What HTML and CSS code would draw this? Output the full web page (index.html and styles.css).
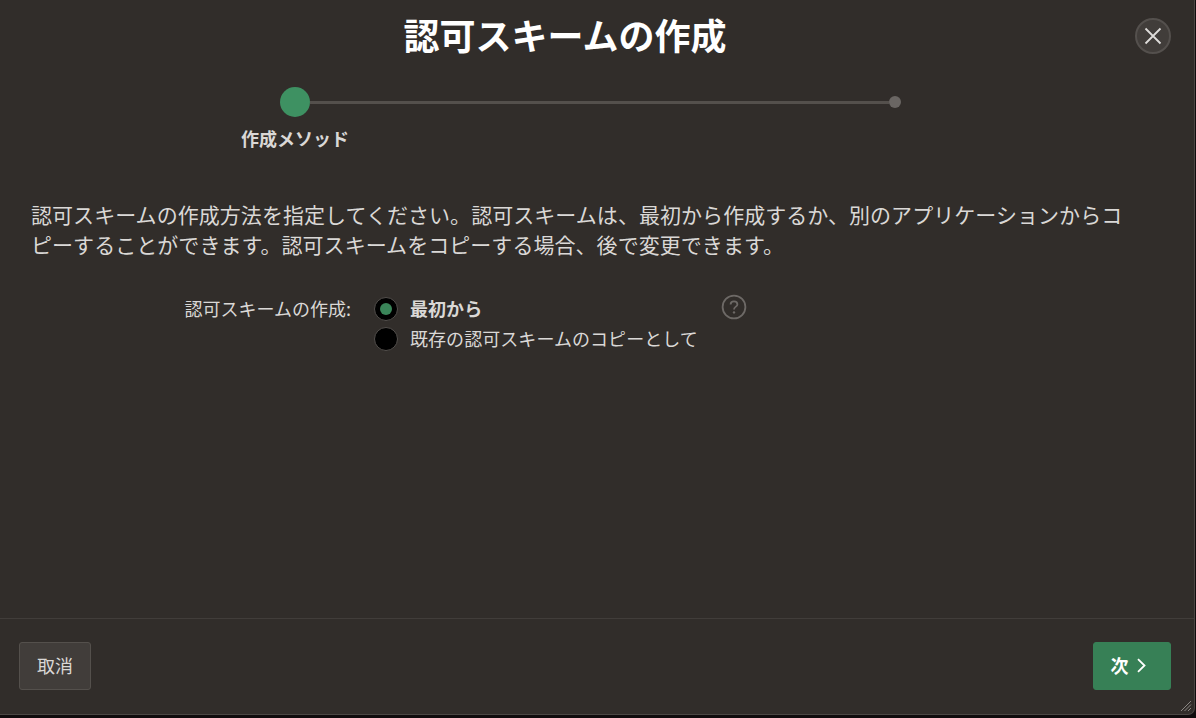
FILE: index.html
```html
<!DOCTYPE html>
<html lang="ja">
<head>
    <meta charset="UTF-8">
    <meta name="viewport" content="width=device-width, initial-scale=1.0">
    <title>認可スキームの作成</title>
    <link rel="stylesheet" href="styles.css">
</head>
<body>
    <div class="dialog">
        <header class="dialog-header">
            <h1 class="title">認可スキームの作成</h1>
            <button class="close-button" type="button" aria-label="閉じる">
                <svg width="18" height="18" viewBox="0 0 18 18"><path d="M1.5 1.5L16.5 16.5M16.5 1.5L1.5 16.5"/></svg>
            </button>
        </header>

        <!-- Wizard progress -->
        <div class="wizard">
            <div class="wizard-track">
                <span class="step-current"></span>
                <span class="step-line"></span>
                <span class="step-next"></span>
            </div>
            <div class="step-label">作成メソッド</div>
        </div>

        <main class="dialog-body">
            <p class="description">認可スキームの作成方法を指定してください。認可スキームは、最初から作成するか、別のアプリケーションからコピーすることができます。認可スキームをコピーする場合、後で変更できます。</p>

            <div class="field">
                <div class="field-label">認可スキームの作成:</div>
                <div class="radio-group">
                    <label class="radio-option selected"><span class="radio"></span><span class="radio-text">最初から</span></label>
                    <label class="radio-option"><span class="radio"></span><span class="radio-text">既存の認可スキームのコピーとして</span></label>
                </div>
                <svg class="help-icon" width="26" height="26" viewBox="0 0 26 26">
                    <circle cx="13" cy="13" r="11.4"/>
                    <path d="M9.6 10.6C9.6 8.5 11 7.4 13 7.4S16.4 8.6 16.4 10.4C16.4 12.7 13 12.6 13 15.4"/>
                    <circle class="dot" cx="13" cy="18.4" r="1.2"/>
                </svg>
            </div>
        </main>

        <footer class="dialog-footer">
            <button class="button" type="button">取消</button>
            <button class="button button-next" type="button">次
                <svg width="9" height="15" viewBox="0 0 9 15"><path d="M1 1.2L7.5 7.5L1 13.8"/></svg>
            </button>
        </footer>

        <svg class="resize-handle" width="12" height="12" viewBox="0 0 12 12"><path d="M1 11L11 1M4.5 11L11 4.5M8 11L11 8"/></svg>
    </div>
</body>
</html>
```

FILE: styles.css
```css
:root {
    --background: #312d2a;
    --border: #413d3a;
    --text: #dad8d6;
    --green: #378056;
}

* {
    box-sizing: border-box;
}

body {
    font-family: 'Noto Sans CJK JP', sans-serif;
    margin: 0;
    height: 718px;
    overflow: hidden;
    background-color: #100c0d;
    color: var(--text);
}

button {
    font-family: inherit;
    color: inherit;
}

.dialog {
    position: relative;
    display: flex;
    flex-direction: column;
    width: 1195px;
    height: 715px;
    background-color: var(--background);
    border-right: 1px solid #4b4744;
    border-bottom: 1px solid #4b4744;
    border-bottom-right-radius: 7px;
}

.dialog-header {
    display: grid;
    grid-template-columns: 1fr auto 1fr;
    align-items: center;
    height: 72px;
    padding-right: 23px;
}

.title {
    grid-column: 2;
    margin: 0 41px 4px 0;
    color: #fff;
    font-size: 36px;
    line-height: 48px;
}

.close-button {
    justify-self: end;
    display: flex;
    align-items: center;
    justify-content: center;
    width: 36px;
    height: 36px;
    padding: 0;
    border: 2px solid #54504d;
    border-radius: 50%;
    background-color: #413d3a;
}

.close-button svg {
    fill: none;
    stroke: #dedcda;
    stroke-width: 1.8;
}

.wizard {
    width: 660px;
    height: 103px;
    margin-left: 241px;
    padding-top: 15px;
}

.wizard-track {
    display: flex;
    align-items: center;
    padding-left: 39px;
}

.step-current {
    width: 30px;
    height: 30px;
    border-radius: 50%;
    background-color: #3e9162;
}

.step-line {
    flex: 1;
    height: 3px;
    background-color: #54504c;
}

.step-next {
    width: 12px;
    height: 12px;
    border-radius: 50%;
    background-color: #6a6663;
}

.step-label {
    margin-top: 8px;
    font-size: 18px;
    font-weight: bold;
    line-height: 27px;
}

.dialog-body {
    flex: 1;
    padding: 24px 60px 0 31px;
}

.description {
    margin: 0;
    font-size: 21px;
    line-height: 30px;
    letter-spacing: 0.05px;
    word-break: break-all;
}

.field {
    display: flex;
    margin-top: 34px;
    font-size: 18px;
    line-height: 30px;
}

.field-label {
    width: 320px;
    text-align: right;
}

.radio-group {
    width: 370px;
    padding-left: 23px;
}

.radio-option {
    display: flex;
    align-items: center;
    gap: 12px;
    height: 30px;
    white-space: nowrap;
}

.radio-text {
    letter-spacing: 0.06px;
}

.selected {
    font-weight: bold;
}

.radio {
    display: flex;
    align-items: center;
    justify-content: center;
    width: 24px;
    height: 24px;
    margin-top: 2px;
    border: 1.5px solid #54504d;
    border-radius: 50%;
    background-color: #000;
}

.selected .radio::after {
    content: '';
    width: 12px;
    height: 12px;
    border-radius: 50%;
    background-color: #3a8559;
}

.help-icon {
    margin-top: 1px;
    fill: none;
    stroke: #6d6966;
    stroke-width: 1.8;
}

.help-icon .dot {
    fill: #6d6966;
    stroke: none;
}

.dialog-footer {
    display: flex;
    justify-content: space-between;
    height: 96px;
    padding: 23px 23px 0 19px;
    border-top: 1px solid var(--border);
}

.button {
    display: flex;
    align-items: center;
    justify-content: center;
    width: 72px;
    height: 48px;
    padding: 0 0 2px;
    border: 1px solid #54504c;
    border-radius: 3px;
    background-color: #413d3a;
    font-size: 18px;
}

.button-next {
    gap: 8px;
    width: 78px;
    padding-right: 8px;
    border-color: var(--green);
    background-color: var(--green);
    color: #fff;
    font-weight: bold;
}

.button-next svg {
    fill: none;
    stroke: #fff;
    stroke-width: 1.8;
}

.resize-handle {
    position: absolute;
    right: 2px;
    bottom: 2px;
    fill: none;
    stroke: #8a8683;
    stroke-width: 1;
}
```
